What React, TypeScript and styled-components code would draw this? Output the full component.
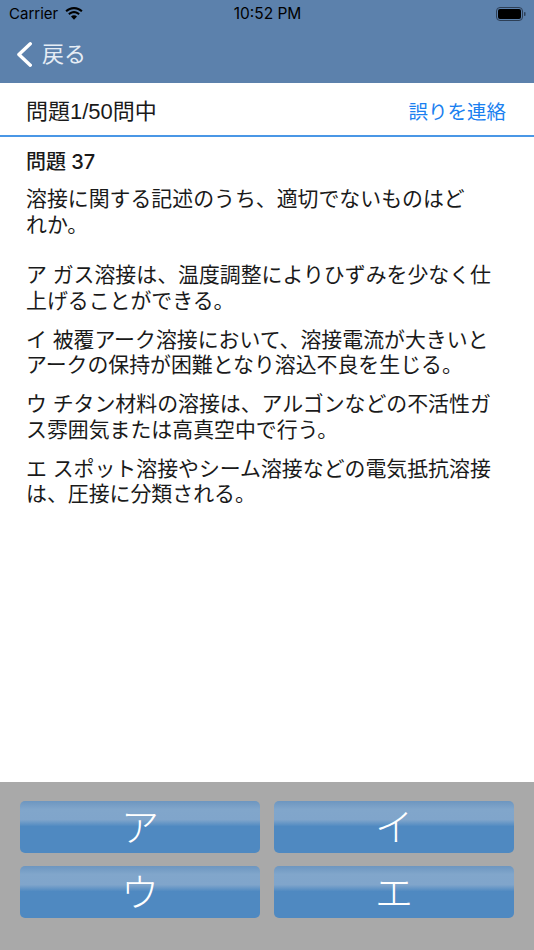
import React from "react";
import styled, { createGlobalStyle } from "styled-components";

const GlobalStyle = createGlobalStyle`
  html, body { margin: 0; padding: 0; background: #fff; }
  body { font-family: "Liberation Sans", "Noto Sans CJK JP", sans-serif; }
`;

const Screen = styled.div`
  width: 534px;
  height: 950px;
  display: flex;
  flex-direction: column;
  overflow: hidden;
`;

const NavBar = styled.header`
  height: 83px;
  flex: none;
  background: #5c81ac;
  display: flex;
  flex-direction: column;
`;

const StatusBar = styled.div`
  height: 27px;
  padding: 0 8px 0 9px;
  display: grid;
  grid-template-columns: 1fr auto 1fr;
  align-items: center;
  color: #000;
  font-family: Inter, "Liberation Sans", sans-serif;
  font-size: 15.5px;
`;

const Carrier = styled.div`
  display: flex;
  align-items: center;
  gap: 6px;
  font-size: 15px;
`;

const Battery = styled.div`
  justify-self: end;
  display: flex;
  align-items: center;
`;

const BackRow = styled.div`
  flex: 1;
  display: flex;
  align-items: center;
  gap: 10px;
  padding: 0 0 1px 17px;
  color: #e6edf5;
  font-size: 22px;
  line-height: 26px;
`;

const InfoRow = styled.div`
  height: 54px;
  flex: none;
  padding: 6px 28px 0 26px;
  display: flex;
  align-items: center;
  justify-content: space-between;
  border-bottom: 2px solid #4a97e6;
  box-sizing: border-box;
`;

const Counter = styled.span`
  font-size: 22px;
  line-height: 28px;
  color: #1a1a1a;
`;

const ReportLink = styled.span`
  font-size: 19.5px;
  line-height: 28px;
  color: #1a80f0;
`;

const Question = styled.main`
  flex: 1;
  padding: 11px 26px 0;
  color: #1a1a1a;
`;

const QuestionTitle = styled.h1`
  margin: 0 0 10px;
  font-family: Inter, "Noto Sans CJK JP", sans-serif;
  font-size: 20px;
  line-height: 28px;
  font-weight: 500;
`;

const Paragraph = styled.p<{ $gap?: number }>`
  margin: 0 0 ${(p) => p.$gap ?? 13.5}px;
  width: 470px;
  font-size: 20.9px;
  line-height: 25.5px;
`;

const AnswerPanel = styled.footer`
  height: 168px;
  flex: none;
  box-sizing: border-box;
  background: #a9a9a9;
  padding: 19px 20px 0;
  display: grid;
  grid-template-columns: 240px 240px;
  grid-auto-rows: 52px;
  column-gap: 14px;
  row-gap: 13px;
`;

const AnswerButton = styled.button`
  border: 0;
  padding: 0 0 4px;
  border-radius: 5px;
  color: #fff;
  font-family: "Noto Sans CJK JP", sans-serif;
  font-size: 38px;
  font-weight: 300;
  line-height: 1;
  background: linear-gradient(
    to bottom,
    #6d96c0 0,
    #81a6cb 16%,
    #80a5cb 36%,
    #4f89c1 49%,
    #4f89c1 100%
  );
`;

const options = ["ア", "イ", "ウ", "エ"];

export default function App() {
  return (
    <Screen>
      <GlobalStyle />
      <NavBar>
        <StatusBar>
          <Carrier>
            Carrier
            <svg width="20" height="14" viewBox="0 0 20 14" fill="#000">
              <path d="M10 2.2c2.8 0 5.3 1.1 7.2 2.9l1.4-1.5C16.3 1.4 13.3 0 10 0S3.700 1.400 1.400 3.600l1.400 1.500C4.700 3.300 7.200 2.200 10 2.200z" />
              <path d="M10 6.300c1.700 0 3.200.6 4.400 1.700l1.400-1.500C14.200 5 12.200 4.100 10 4.100s-4.200.9-5.800 2.400l1.400 1.500C6.800 6.900 8.300 6.300 10 6.300z" />
              <path d="M10 8.200c-1.200 0-2.200.4-3 1.200l3 3.300 3-3.300c-.8-.8-1.800-1.200-3-1.200z" />
            </svg>
          </Carrier>
          <span>10:52 PM</span>
          <Battery>
            <svg width="30" height="14" viewBox="0 0 30 14">
              <rect x="0.5" y="0.5" width="26" height="13" rx="3.5" fill="none" stroke="#2d3f56" />
              <rect x="2" y="2" width="23" height="10" rx="2" fill="#000" />
              <rect x="28" y="5" width="1.500" height="4" rx="0.700" fill="#2d3f56" />
            </svg>
          </Battery>
        </StatusBar>
        <BackRow>
          <svg width="15" height="25" viewBox="0 0 15 25" fill="none" stroke="#fff" strokeWidth="3.400" strokeLinecap="round" strokeLinejoin="round">
            <path d="M13.300 1.800 L1.900 12.500 L13.300 23.200" />
          </svg>
          戻る
        </BackRow>
      </NavBar>
      <InfoRow>
        <Counter>問題1/50問中</Counter>
        <ReportLink>誤りを連絡</ReportLink>
      </InfoRow>
      <Question>
        <QuestionTitle>問題 37</QuestionTitle>
        <Paragraph $gap={25}>
          溶接に関する記述のうち、適切でないものはど
          <br />
          れか。
        </Paragraph>
        <Paragraph>ア ガス溶接は、温度調整によりひずみを少なく仕上げることができる。</Paragraph>
        <Paragraph>イ 被覆アーク溶接において、溶接電流が大きいとアークの保持が困難となり溶込不良を生じる。</Paragraph>
        <Paragraph>ウ チタン材料の溶接は、アルゴンなどの不活性ガス雰囲気または高真空中で行う。</Paragraph>
        <Paragraph>エ スポット溶接やシーム溶接などの電気抵抗溶接は、圧接に分類される。</Paragraph>
      </Question>
      <AnswerPanel>
        {options.map((o) => (
          <AnswerButton key={o}>{o}</AnswerButton>
        ))}
      </AnswerPanel>
    </Screen>
  );
}
